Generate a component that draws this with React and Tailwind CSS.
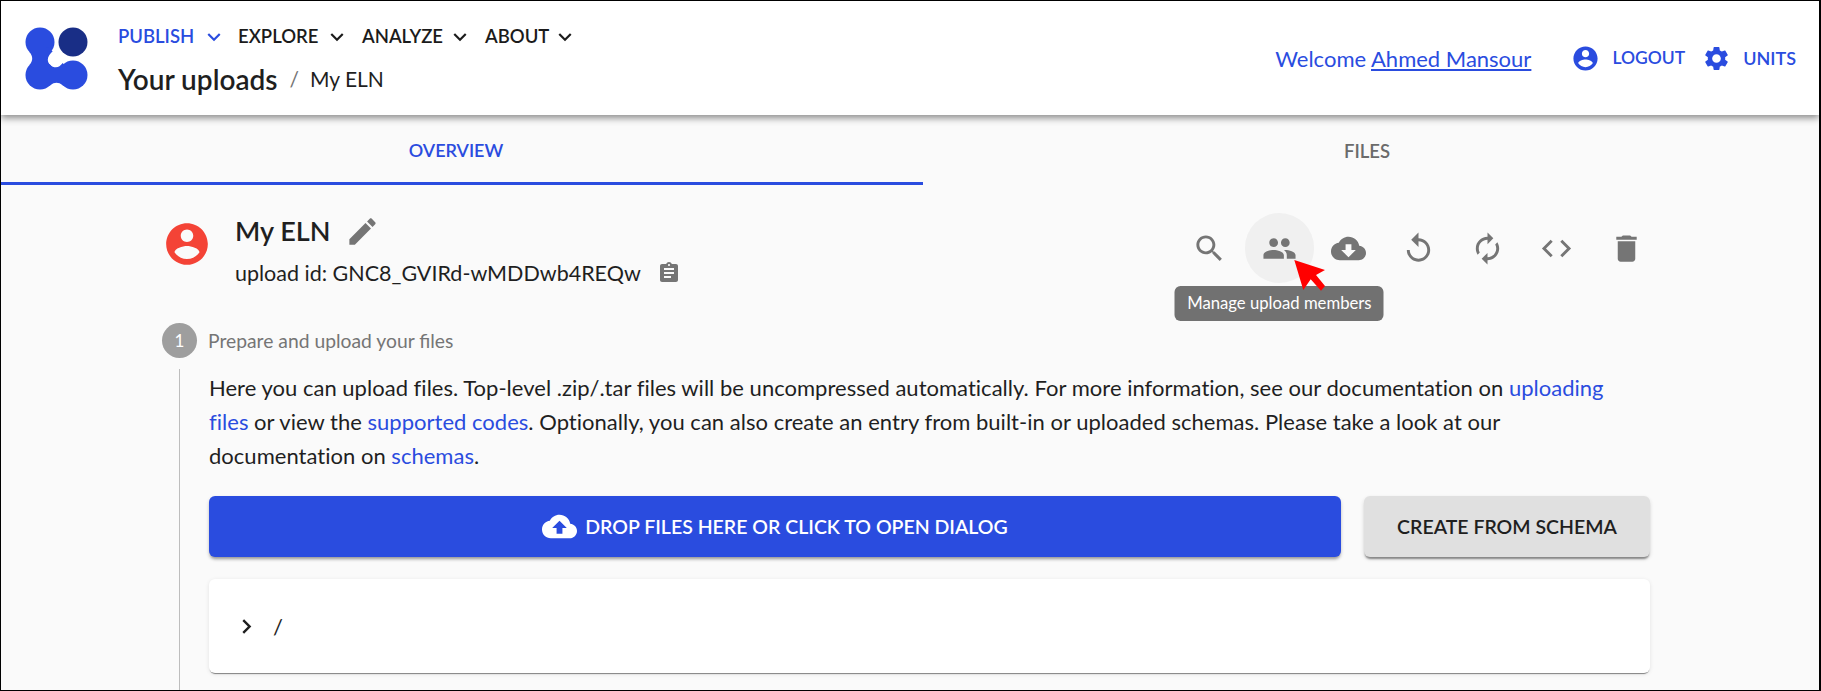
import React from 'react';

const ICONS = {
  expand: 'M16.59 8.59L12 13.17 7.41 8.59 6 10l6 6 6-6z',
  chevron: 'M10 6L8.59 7.41 13.17 12l-4.58 4.59L10 18l6-6z',
  account: 'M12 2C6.48 2 2 6.48 2 12s4.48 10 10 10 10-4.48 10-10S17.52 2 12 2zm0 3c1.66 0 3 1.34 3 3s-1.34 3-3 3-3-1.34-3-3 1.34-3 3-3zm0 14.2c-2.5 0-4.71-1.28-6-3.22.03-1.99 4-3.08 6-3.08 1.99 0 5.97 1.09 6 3.08-1.29 1.94-3.5 3.22-6 3.22z',
  settings: 'M19.14 12.94c.04-.3.06-.61.06-.94 0-.32-.02-.64-.07-.94l2.03-1.58c.18-.14.23-.41.12-.61l-1.92-3.32c-.12-.22-.37-.29-.59-.22l-2.39.96c-.5-.38-1.03-.7-1.62-.94l-.36-2.54c-.04-.24-.24-.41-.48-.41h-3.84c-.24 0-.43.17-.47.41l-.36 2.54c-.59.24-1.13.57-1.62.94l-2.39-.96c-.22-.08-.47 0-.59.22L2.74 8.87c-.12.21-.08.47.12.61l2.03 1.58c-.05.3-.09.63-.09.94s.02.64.07.94l-2.03 1.58c-.18.14-.23.41-.12.61l1.92 3.32c.12.22.37.29.59.22l2.39-.96c.5.38 1.03.7 1.62.94l.36 2.54c.05.24.24.41.48.41h3.84c.24 0 .44-.17.47-.41l.36-2.54c.59-.24 1.13-.56 1.62-.94l2.39.96c.22.08.47 0 .59-.22l1.92-3.32c.12-.22.07-.47-.12-.61l-2.01-1.58zM12 15.6c-1.98 0-3.6-1.62-3.6-3.6s1.62-3.6 3.6-3.6 3.6 1.62 3.6 3.6-1.62 3.6-3.6 3.6z',
  edit: 'M3 17.25V21h3.75L17.81 9.94l-3.75-3.75L3 17.25zM20.71 7.04c.39-.39.39-1.02 0-1.41l-2.34-2.34c-.39-.39-1.02-.39-1.41 0l-1.83 1.83 3.75 3.75 1.83-1.83z',
  assignment: 'M19 3h-4.18C14.4 1.84 13.3 1 12 1c-1.3 0-2.4.84-2.82 2H5c-1.1 0-2 .9-2 2v14c0 1.1.9 2 2 2h14c1.1 0 2-.9 2-2V5c0-1.1-.9-2-2-2zm-7 0c.55 0 1 .45 1 1s-.45 1-1 1-1-.45-1-1 .45-1 1-1zm2 14H7v-2h7v2zm3-4H7v-2h10v2zm0-4H7V7h10v2z',
  search: 'M15.5 14h-.79l-.28-.27C15.41 12.59 16 11.11 16 9.5 16 5.91 13.09 3 9.5 3S3 5.91 3 9.5 5.91 16 9.5 16c1.61 0 3.09-.59 4.23-1.57l.27.28v.79l5 4.99L20.49 19l-4.99-5zm-6 0C7.01 14 5 11.99 5 9.5S7.01 5 9.5 5 14 7.01 14 9.5 11.99 14 9.5 14z',
  people: 'M16 11c1.66 0 2.99-1.34 2.99-3S17.66 5 16 5c-1.66 0-3 1.34-3 3s1.34 3 3 3zm-8 0c1.66 0 2.99-1.34 2.99-3S9.66 5 8 5C6.34 5 5 6.34 5 8s1.34 3 3 3zm0 2c-2.33 0-7 1.17-7 3.5V19h14v-2.5c0-2.33-4.67-3.5-7-3.5zm8 0c-.29 0-.62.02-.97.05 1.16.84 1.97 1.97 1.97 3.45V19h6v-2.5c0-2.33-4.67-3.5-7-3.5z',
  download: 'M19.35 10.04C18.67 6.59 15.64 4 12 4 9.11 4 6.6 5.64 5.35 8.04 2.34 8.36 0 10.91 0 14c0 3.31 2.69 6 6 6h13c2.76 0 5-2.24 5-5 0-2.64-2.05-4.78-4.65-4.96zM17 13l-5 5-5-5h3V9h4v4h3z',
  upload: 'M19.35 10.04C18.67 6.59 15.64 4 12 4 9.11 4 6.6 5.64 5.35 8.04 2.34 8.36 0 10.91 0 14c0 3.31 2.69 6 6 6h13c2.76 0 5-2.24 5-5 0-2.64-2.05-4.78-4.65-4.96zM14 13v4h-4v-4H7l5-5 5 5h-3z',
  replay: 'M12 5V1L7 6l5 5V7c3.31 0 6 2.69 6 6s-2.69 6-6 6-6-2.69-6-6H4c0 4.42 3.58 8 8 8s8-3.58 8-8-3.58-8-8-8z',
  autorenew: 'M12 6v3l4-4-4-4v3c-4.42 0-8 3.58-8 8 0 1.57.46 3.03 1.24 4.26L6.7 14.8c-.45-.83-.7-1.79-.7-2.8 0-3.31 2.69-6 6-6zm6.76 1.74L17.3 9.2c.44.84.7 1.79.7 2.8 0 3.31-2.69 6-6 6v-3l-4 4 4 4v-3c4.42 0 8-3.58 8-8 0-1.57-.46-3.03-1.24-4.26z',
  code: 'M9.4 16.6L4.8 12l4.6-4.6L8 6l-6 6 6 6 1.4-1.4zm5.2 0l4.6-4.6-4.6-4.6L16 6l6 6-6 6-1.4-1.4z',
  trash: 'M6 19c0 1.1.9 2 2 2h8c1.1 0 2-.9 2-2V7H6v12zM19 4h-3.5l-1-1h-5l-1 1H5v2h14V4z',
};

function Icon({ name, className }) {
  return (
    <svg viewBox="0 0 24 24" fill="currentColor" className={className}>
      <path d={ICONS[name]} />
    </svg>
  );
}

function Logo() {
  return (
    <svg viewBox="0 0 64 63" className="w-[64px] h-[63px] shrink-0">
      <circle cx="48" cy="15" r="14.5" fill="#192e86" />
      <circle cx="15" cy="15" r="14.5" fill="#2a4cdf" />
      <circle cx="15" cy="48" r="14.5" fill="#2a4cdf" />
      <circle cx="48" cy="48" r="14.5" fill="#2a4cdf" />
      <path
        fill="#2a4cdf"
        d="M4.5 25C6.5 27.5 7.2 29.5 7.2 31.5C7.2 33.5 6.5 35.5 4.5 38L15 48L25 58.5C27.5 56.5 29.5 55.8 31.5 55.8C33.5 55.8 35.5 56.5 38 58.5L48 48L37.7 36C35.5 38.8 33.5 40.3 31 40.3C26.5 40.3 22.8 37 22.8 32.5C22.8 29.5 25.5 26.5 27.7 24.3L15 15Z"
      />
    </svg>
  );
}

function NavItem({ label, active, textWidth }) {
  return (
    <div className={`flex items-center ${active ? 'text-[#2a4cdf]' : 'text-[#1b1b1b]'}`}>
      <span className={`text-[18.5px] font-semibold whitespace-nowrap ${textWidth}`}>{label}</span>
      <Icon name="expand" className="w-[26px] h-[26px]" />
    </div>
  );
}

const ACTIONS = ['search', 'people', 'download', 'replay', 'autorenew', 'code', 'trash'];

export default function App() {
  return (
    <div className="relative w-[1821px] h-[691px] overflow-hidden bg-[#fafafa] border-t border-l border-b border-r-2 border-black text-[#1f1f1f] font-['Lato',sans-serif] flex flex-col">
      {/* App bar */}
      <header className="relative z-10 h-[114px] shrink-0 bg-white shadow-[0_3px_7px_rgba(0,0,0,0.45)] flex items-center pl-6 pr-[23px]">
        <Logo />
        <div className="ml-[29px] flex flex-col mt-[2px]">
          <nav className="flex items-center h-[36px]">
            <NavItem label="PUBLISH" active textWidth="w-[83px]" />
            <div className="ml-[11px]"><NavItem label="EXPLORE" textWidth="w-[86px]" /></div>
            <div className="ml-[12px]"><NavItem label="ANALYZE" textWidth="w-[85px]" /></div>
            <div className="ml-[12px]"><NavItem label="ABOUT" textWidth="w-[67px]" /></div>
          </nav>
          <div className="flex items-center h-[42px] mt-[3px]">
            <span className="text-[28px] font-semibold">Your uploads</span>
            <span className="text-[21px] text-[#757575] ml-[12px]">/</span>
            <span className="text-[21px] ml-[11px]">My ELN</span>
          </div>
        </div>
        <div className="ml-auto flex items-center text-[#2a4cdf]">
          <span className="text-[22px] whitespace-nowrap">Welcome <span className="underline underline-offset-2">Ahmed Mansour</span></span>
          <Icon name="account" className="w-[29px] h-[29px] ml-[40px]" />
          <span className="ml-[12px] text-[17.5px] font-semibold">LOGOUT</span>
          <Icon name="settings" className="w-[29px] h-[29px] ml-[17px]" />
          <span className="ml-[12px] text-[18px] font-semibold">UNITS</span>
        </div>
      </header>

      {/* Tabs */}
      <div className="flex h-[70px] shrink-0 text-[18px] font-semibold">
        <div className="w-[922px] flex items-center justify-center pr-[12px] pt-[3px] border-b-[3px] border-[#2a4cdf] text-[#2a4cdf]">OVERVIEW</div>
        <div className="flex-1 flex items-center justify-center pr-[8px] pt-[3px] text-[18.5px] text-[#6b6b6b]">FILES</div>
      </div>

      <div className="ml-[161px] w-[1499px]">
        {/* Upload header */}
        <div className="flex h-[70px] mt-[28px]">
          <Icon name="account" className="w-[50px] h-[50px] mt-[6px] text-[#f44336] shrink-0" />
          <div className="ml-[23px]">
            <div className="flex items-center h-[36px]">
              <span className="text-[27px] font-semibold">My ELN</span>
              <Icon name="edit" className="w-[35px] h-[35px] ml-[15px] text-[#757575]" />
            </div>
            <div className="flex items-center h-[34px] mt-[7px]">
              <span className="text-[21.5px] whitespace-nowrap">upload id: GNC8_GVIRd-wMDDwb4REQw</span>
              <Icon name="assignment" className="w-[24px] h-[24px] ml-[16px] text-[#757575]" />
            </div>
          </div>
          <div className="ml-auto flex">
            {ACTIONS.map(name => (
              <div key={name} className={`relative w-[69.4px] h-[70px] flex items-center justify-center rounded-full text-[#757575] ${name === 'people' ? 'bg-[#f0f0f0]' : ''}`}>
                <Icon name={name} className="w-[35px] h-[35px]" />
                {name === 'people' && (
                  <>
                    <div className="absolute top-[73px] left-1/2 -translate-x-1/2 w-[209px] h-[35px] rounded-[6px] bg-[#717171] text-white text-[16.7px] flex items-center justify-center whitespace-nowrap">
                      Manage upload members
                    </div>
                    <svg viewBox="0 0 32 31" className="absolute left-[49px] top-[47px] w-[32px] h-[31px]">
                      <polygon fill="#ff0000" points="0.3,0 31,10 22,15 31,26 27,30.7 16.7,19.3 9.3,30" />
                    </svg>
                  </>
                )}
              </div>
            ))}
          </div>
        </div>

        {/* Step 1 */}
        <div className="flex items-center mt-[40px] h-[35px]">
          <div className="w-[35px] h-[35px] rounded-full bg-[#9e9e9e] text-white text-[17px] flex items-center justify-center">1</div>
          <span className="ml-[11px] pt-[1px] text-[19.3px] text-[#757575]">Prepare and upload your files</span>
        </div>
        <div className="ml-[17px] mt-[11px] pl-[29px] border-l border-[#bdbdbd] pt-[2px] h-[400px]">
          <p className="text-[22px] leading-[34px] tracking-[0.02px] whitespace-nowrap">
            Here you can upload files. Top-level .zip/.tar files will be uncompressed automatically. For more information, see our documentation on <a className="text-[#2a4cdf]">uploading</a><br />
            <a className="text-[#2a4cdf]">files</a> or view the <a className="text-[#2a4cdf]">supported codes</a>. Optionally, you can also create an entry from built-in or uploaded schemas. Please take a look at our<br />
            documentation on <a className="text-[#2a4cdf]">schemas</a>.
          </p>
          <div className="flex gap-[23px] mt-[23px] w-[1441px] text-[19.5px] font-semibold">
            <div className="w-[1132px] h-[61px] rounded-[6px] bg-[#2a4cdf] text-white flex items-center justify-center shadow-[0_3px_3px_-1px_rgba(0,0,0,0.3),0_2px_4px_rgba(0,0,0,0.14)]">
              <Icon name="upload" className="w-[35px] h-[35px] mr-[8px]" />
              DROP FILES HERE OR CLICK TO OPEN DIALOG
            </div>
            <div className="flex-1 h-[61px] rounded-[6px] bg-[#e0e0e0] flex items-center justify-center shadow-[0_3px_2px_-1px_rgba(0,0,0,0.4),0_2px_4px_rgba(0,0,0,0.14)]">
              CREATE FROM SCHEMA
            </div>
          </div>
          <div className="mt-[22px] w-[1441px] h-[94px] rounded-[6px] bg-white flex items-center pl-[23px] shadow-[0_2px_1px_-1px_rgba(0,0,0,0.45),0_1px_4px_rgba(0,0,0,0.1)]">
            <Icon name="chevron" className="w-[29px] h-[29px] text-[#1f1f1f]" />
            <span className="text-[22px] ml-[12px]">/</span>
          </div>
        </div>
      </div>
    </div>
  );
}
